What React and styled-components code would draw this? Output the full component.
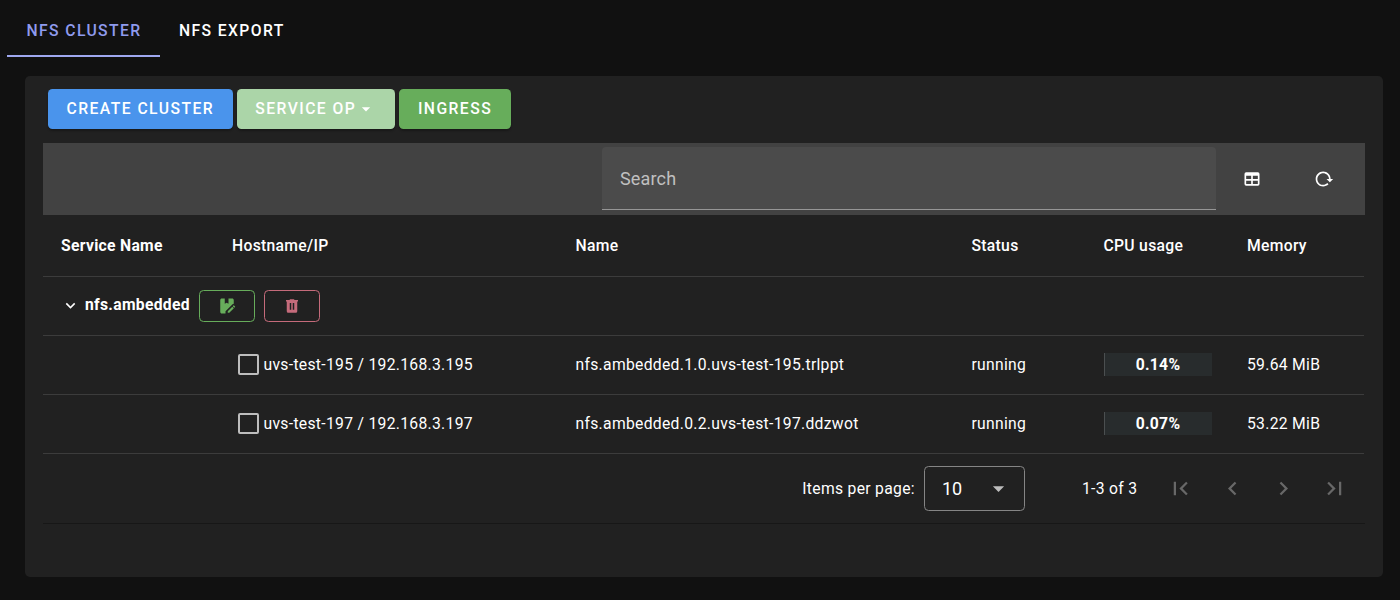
import React, { useState } from "react";
import styled, { createGlobalStyle } from "styled-components";

const GlobalStyle = createGlobalStyle`
  * {
    box-sizing: border-box;
  }
  body {
    margin: 0;
    background: #111111;
    color: #fff;
    font-family: Roboto, "Liberation Sans", sans-serif;
  }
`;

// ---------- ICON PATHS ----------
const icons = {
  table:
    "M5,4H19A2,2 0 0,1 21,6V18A2,2 0 0,1 19,20H5A2,2 0 0,1 3,18V6A2,2 0 0,1 5,4M5,8V12H11V8H5M13,8V12H19V8H13M5,14V18H11V14H5M13,14V18H19V14H13Z",
  reload:
    "M2 12C2 16.97 6.03 21 11 21C13.39 21 15.68 20.06 17.4 18.4L15.9 16.9C14.63 18.25 12.86 19 11 19C4.76 19 1.64 11.46 6.05 7.05C10.46 2.64 18 5.77 18 12H15L19 16H19.1L23 12H20C20 7.03 15.97 3 11 3C6.03 3 2 7.03 2 12Z",
  chevronDown: "M7.41,8.58L12,13.17L16.59,8.58L18,10L12,16L6,10L7.41,8.58Z",
  book: "M19 2L14 2V9L11.5 7.5L9 9V2H5C3.9 2 3 2.9 3 4V20C3 21.1 3.9 22 5 22H10V19.1L19.4 9.7C19.9 9.3 20.4 9 21 9V4C21 2.9 20.1 2 19 2M21.04 11.14C20.9 11.14 20.76 11.2 20.65 11.3L19.65 12.3L21.7 14.35L22.7 13.35C22.92 13.14 22.92 12.79 22.7 12.58L21.42 11.3C21.32 11.2 21.18 11.14 21.04 11.14M19.06 12.88L13 18.94V21H15.06L21.12 14.93L19.06 12.88Z",
  trash:
    "M9,3V4H4V6H5V19A2,2 0 0,0 7,21H17A2,2 0 0,0 19,19V6H20V4H15V3H9M9,8H11V17H9V8M13,8H15V17H13V8Z",
  menuDown: "M7,10L12,15L17,10H7Z",
  first: "M18.41,16.59L13.82,12L18.41,7.41L17,6L11,12L17,18L18.41,16.59M6,6H8V18H6V6Z",
  prev: "M15.41,16.58L10.83,12L15.41,7.41L14,6L8,12L14,18L15.41,16.58Z",
  next: "M8.59,16.58L13.17,12L8.59,7.41L10,6L16,12L10,18L8.59,16.58Z",
  last: "M5.59,7.41L10.18,12L5.59,16.59L7,18L13,12L7,6L5.59,7.41M16,6H18V18H16V6Z",
};

const Icon = ({ name, size = 24 }) => (
  <svg width={size} height={size} viewBox="0 0 24 24" fill="currentColor" aria-hidden="true">
    <path d={icons[name]} />
  </svg>
);

// ---------- STYLED COMPONENTS ----------
const Page = styled.div`
  height: 600px;
  overflow: hidden;
`;
const Tabs = styled.nav`
  display: flex;
  padding-left: 7px;
`;
const Tab = styled.button`
  height: 57px;
  padding: 5px 18px 0 19.5px;
  border: none;
  border-bottom: 2px solid ${(p) => (p.$active ? "#9fa8f0" : "transparent")};
  background: none;
  color: ${(p) => (p.$active ? "#8f9bee" : "#fff")};
  font: 500 15.7px Roboto, sans-serif;
  letter-spacing: 1.4px;
  cursor: pointer;
`;
const Card = styled.main`
  height: 501px;
  margin: 19px 17.5px 0 25px;
  padding: 13px 18px 0;
  background: #212121;
  border-radius: 5px;
`;
const Actions = styled.div`
  display: flex;
  gap: 4.5px;
  padding-left: 5px;
  margin-bottom: 14px;
`;
const ActionButton = styled.button`
  display: flex;
  align-items: center;
  justify-content: center;
  width: ${(p) => p.$width}px;
  height: 40px;
  padding: 0 0 1px;
  border: none;
  border-radius: 4.5px;
  background: ${(p) => p.$bg};
  color: #fff;
  font: 500 15.7px Roboto, sans-serif;
  letter-spacing: 1.46px;
  box-shadow: 0 2px 2px rgba(0, 0, 0, 0.25);
`;
const Toolbar = styled.div`
  display: flex;
  align-items: center;
  height: 71.5px;
  padding-left: 559px;
  background: #424242;
`;
const SearchInput = styled.input`
  width: 614px;
  height: 63px;
  padding: 0 18px;
  border: none;
  border-bottom: 1px solid #969696;
  border-radius: 4px 4px 0 0;
  outline: none;
  background: #4b4b4b;
  color: #fff;
  font: 400 18px Roboto, sans-serif;
  letter-spacing: 0.16px;
  &::placeholder {
    color: #c0c0c0;
    opacity: 1;
  }
`;
const ToolButton = styled.button`
  display: flex;
  align-items: center;
  justify-content: center;
  width: 72px;
  height: 54px;
  padding: 0;
  border: none;
  background: none;
  color: #fff;
`;
const Table = styled.table`
  width: 1321px;
  table-layout: fixed;
  border-collapse: separate;
  border-spacing: 0;
  font-size: 15.7px;
  letter-spacing: 0.3px;
`;
const Row = styled.tr`
  height: ${(p) => p.$height}px;
`;
const HeadCell = styled.th`
  width: ${(p) => p.$width};
  padding: 0 0 0 18px;
  border-bottom: 1px solid #3c3c3c;
  font-weight: ${(p) => (p.$bold ? 700 : 500)};
  text-align: left;
`;
const Cell = styled.td`
  padding: 0 0 0 18px;
  border-bottom: 1px solid #3c3c3c;
  white-space: nowrap;
`;
const Group = styled.div`
  display: flex;
  align-items: center;
`;
const GroupName = styled.strong`
  margin: 0 9px 0 5px;
  padding-bottom: 2px;
`;
const OutlineButton = styled.button`
  display: flex;
  align-items: center;
  justify-content: center;
  width: 56px;
  height: 32px;
  margin-right: 9px;
  padding: 0;
  border: 1px solid currentColor;
  border-radius: 4.5px;
  background: none;
  color: ${(p) => p.$color};
`;
const Host = styled.label`
  display: flex;
  align-items: center;
  gap: 5px;
  padding-left: 5.5px;
`;
const Checkbox = styled.input`
  appearance: none;
  width: 21px;
  height: 21px;
  margin: 0;
  border: 2px solid #bdbdbd;
  border-radius: 2px;
`;
const Usage = styled.div`
  display: flex;
  align-items: center;
  justify-content: center;
  width: 108px;
  height: 23px;
  border-left: 1px solid #4b4f50;
  background: #282c2d;
  font-weight: 700;
`;
const Footer = styled.footer`
  display: flex;
  align-items: center;
  justify-content: flex-end;
  height: 70px;
  padding-right: 4.5px;
  border-bottom: 1px solid #171717;
  font-size: 15.7px;
  letter-spacing: 0.3px;
`;
const PageSize = styled.button`
  display: flex;
  align-items: center;
  justify-content: space-between;
  width: 101px;
  height: 45px;
  margin: 0 57px 0 9px;
  padding: 0 12px 0 17px;
  border: 1px solid #858585;
  border-radius: 4.5px;
  background: none;
  color: #fff;
  font: 400 18px Roboto, sans-serif;
  svg {
    color: #bdbdbd;
  }
`;
const Pager = styled.div`
  display: flex;
  margin-left: 18px;
`;
const PagerButton = styled.button`
  display: flex;
  align-items: center;
  justify-content: center;
  width: 51.2px;
  height: 51px;
  padding: 0;
  border: none;
  background: none;
  color: #686868;
`;

const columns = [
  { title: "Service Name", width: "171px", bold: true },
  { title: "Hostname/IP", width: "343.5px" },
  { title: "Name", width: "396px" },
  { title: "Status", width: "132px" },
  { title: "CPU usage", width: "143.5px" },
  { title: "Memory", width: "auto" },
];

const services = [
  {
    host: "uvs-test-195 / 192.168.3.195",
    name: "nfs.ambedded.1.0.uvs-test-195.trlppt",
    status: "running",
    cpu: "0.14%",
    memory: "59.64 MiB",
  },
  {
    host: "uvs-test-197 / 192.168.3.197",
    name: "nfs.ambedded.0.2.uvs-test-197.ddzwot",
    status: "running",
    cpu: "0.07%",
    memory: "53.22 MiB",
  },
];

// ---------- MAIN COMPONENT ----------
const App = () => {
  const [tab, setTab] = useState("NFS CLUSTER");
  const [search, setSearch] = useState("");

  return (
    <Page>
      <GlobalStyle />
      <Tabs>
        {["NFS CLUSTER", "NFS EXPORT"].map((label) => (
          <Tab key={label} $active={tab === label} onClick={() => setTab(label)}>
            {label}
          </Tab>
        ))}
      </Tabs>
      <Card>
        <Actions>
          <ActionButton $width={184.5} $bg="#4a94ec">CREATE CLUSTER</ActionButton>
          <ActionButton $width={157.5} $bg="#abd5a8">
            SERVICE OP
            <Icon name="menuDown" size={20} />
          </ActionButton>
          <ActionButton $width={112} $bg="#67ad5b">INGRESS</ActionButton>
        </Actions>
        <Toolbar>
          <SearchInput
            placeholder="Search"
            value={search}
            onChange={(e) => setSearch(e.target.value)}
          />
          <ToolButton aria-label="Columns">
            <Icon name="table" size={20} />
          </ToolButton>
          <ToolButton aria-label="Reload">
            <Icon name="reload" size={20} />
          </ToolButton>
        </Toolbar>
        <Table>
          <thead>
            <Row $height={62.5}>
              {columns.map((c) => (
                <HeadCell key={c.title} $width={c.width} $bold={c.bold}>
                  {c.title}
                </HeadCell>
              ))}
            </Row>
          </thead>
          <tbody>
            <Row $height={58.5}>
              <Cell colSpan={6}>
                <Group>
                  <Icon name="chevronDown" size={19} />
                  <GroupName>nfs.ambedded</GroupName>
                  <OutlineButton $color="#67ad5b" aria-label="Edit">
                    <Icon name="book" size={18} />
                  </OutlineButton>
                  <OutlineButton $color="#c56b7b" aria-label="Delete">
                    <Icon name="trash" size={18} />
                  </OutlineButton>
                </Group>
              </Cell>
            </Row>
            {services.map((s) => (
              <Row key={s.name} $height={59}>
                <Cell />
                <Cell>
                  <Host>
                    <Checkbox type="checkbox" />
                    {s.host}
                  </Host>
                </Cell>
                <Cell>{s.name}</Cell>
                <Cell>{s.status}</Cell>
                <Cell>
                  <Usage>{s.cpu}</Usage>
                </Cell>
                <Cell>{s.memory}</Cell>
              </Row>
            ))}
          </tbody>
        </Table>
        <Footer>
          Items per page:
          <PageSize>
            10
            <Icon name="menuDown" size={27} />
          </PageSize>
          1-3 of 3
          <Pager>
            {["first", "prev", "next", "last"].map((name) => (
              <PagerButton key={name} aria-label={name} disabled>
                <Icon name={name} size={27} />
              </PagerButton>
            ))}
          </Pager>
        </Footer>
      </Card>
    </Page>
  );
};

export default App;
